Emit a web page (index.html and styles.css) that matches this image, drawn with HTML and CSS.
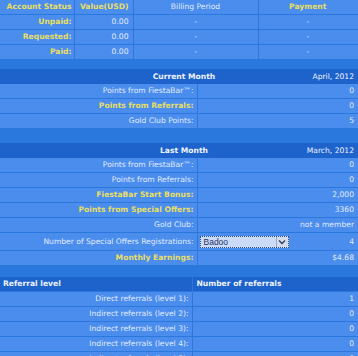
FILE: index.html
```html
<!DOCTYPE html>
<html>
<head>
<meta charset="utf-8">
<link rel="stylesheet" href="styles.css">
</head>
<body>
<div class="page">
  <table class="tbl status">
    <colgroup><col class="c1"><col class="c2"><col class="c3"><col class="c4"></colgroup>
    <tr>
      <td class="r y b">Account Status</td>
      <td class="r y b">Value(USD)</td>
      <td class="c">Billing Period</td>
      <td class="c y b">Payment</td>
    </tr>
    <tr><td class="r y b">Unpaid:</td><td class="r">0.00</td><td class="c">-</td><td class="c">-</td></tr>
    <tr><td class="r y b">Requested:</td><td class="r">0.00</td><td class="c">-</td><td class="c">-</td></tr>
    <tr><td class="r y b">Paid:</td><td class="r">0.00</td><td class="c">-</td><td class="c">-</td></tr>
  </table>

  <div class="mhead m1">
    <span></span>
    <span class="mtitle">Current Month</span>
    <span class="mdate">April, 2012</span>
  </div>
  <table class="tbl month">
    <colgroup><col class="l"><col class="v"></colgroup>
    <tr><td class="r">Points from FiestaBar™:</td><td class="r">0</td></tr>
    <tr><td class="r y b">Points from Referrals:</td><td class="r">0</td></tr>
    <tr><td class="r">Gold Club Points:</td><td class="r">5</td></tr>
  </table>

  <div class="mhead m2">
    <span></span>
    <span class="mtitle">Last Month</span>
    <span class="mdate">March, 2012</span>
  </div>
  <table class="tbl month">
    <colgroup><col class="l"><col class="v"></colgroup>
    <tr><td class="r">Points from FiestaBar™:</td><td class="r">0</td></tr>
    <tr><td class="r">Points from Referrals:</td><td class="r">0</td></tr>
    <tr><td class="r y b">FiestaBar Start Bonus:</td><td class="r">2,000</td></tr>
    <tr><td class="r y b">Points from Special Offers:</td><td class="r">3360</td></tr>
    <tr><td class="r">Gold Club:</td><td class="r">not a member</td></tr>
    <tr class="tall">
      <td class="r">Number of Special Offers Registrations:</td>
      <td class="r">
        <div class="selrow">
          <div class="sel">
            <span class="seltext">Badoo</span>
            <span class="selbtn"><svg width="8" height="6" viewBox="0 0 8 6"><path d="M1 1.5 L4 4.5 L7 1.5" fill="none" stroke="#2a3f6a" stroke-width="1.4"/></svg></span>
          </div>
          <span>4</span>
        </div>
      </td>
    </tr>
    <tr><td class="r y b">Monthly Earnings:</td><td class="r">$4.68</td></tr>
  </table>

  <table class="tbl refs">
    <colgroup><col class="l"><col class="v"></colgroup>
    <tr class="hd"><td class="lf b">Referral level</td><td class="lf b">Number of referrals</td></tr>
    <tr><td class="r">Direct referrals (level 1):</td><td class="r">1</td></tr>
    <tr><td class="r">Indirect referrals (level 2):</td><td class="r">0</td></tr>
    <tr><td class="r">Indirect referrals (level 3):</td><td class="r">0</td></tr>
    <tr><td class="r">Indirect referrals (level 4):</td><td class="r">0</td></tr>
    <tr><td class="r">Indirect referrals (level 5):</td><td class="r">0</td></tr>
  </table>
</div>
</body>
</html>
```
FILE: styles.css
```css
html, body {
  margin: 0;
  padding: 0;
  background: #2a78de;
}
body {
  font-family: "DejaVu Sans", Verdana, sans-serif;
  font-size: 7.6px;
  color: #e2ecff;
}
.page {
  width: 358px;
  overflow: hidden;
}
.tbl {
  width: 358px;
  border-collapse: collapse;
  table-layout: fixed;
}
.tbl td {
  height: 14px;
  padding: 0 3px;
  background: #4a8ded;
  border-bottom: 1px solid #2a78de;
  border-right: 1px solid #2a78de;
  white-space: nowrap;
  overflow: hidden;
  line-height: 14px;
}
.tbl td:last-child {
  border-right: none;
  padding-right: 4px;
}
.status .c1 { width: 74px; }
.status .c2 { width: 59px; }
.status .c3 { width: 125px; }
.status .c4 { width: 100px; }
.status td:first-child { padding-right: 2px; }
.status td:nth-child(2) { padding-right: 4px; }

.month .l { width: 197px; }
.month .v { width: 161px; }
.refs .l { width: 192px; }
.refs .v { width: 166px; }

.r { text-align: right; }
.c { text-align: center; }
.lf { text-align: left; }
.y { color: #e9df63; }
.b { font-weight: bold; }

.mhead {
  display: grid;
  grid-template-columns: 120px 128px 1fr;
  height: 15px;
  line-height: 15px;
  background: #1d63cb;
  color: #eef3ff;
}
.m1 { margin-top: 9px; }
.m2 { margin-top: 14px; }
.mtitle {
  text-align: center;
  font-weight: bold;
}
.mdate {
  text-align: right;
  padding-right: 4px;
}

.tall td {
  height: 17px;
  line-height: 17px;
}
.selrow {
  display: flex;
  align-items: center;
  justify-content: space-between;
}
.sel {
  display: flex;
  align-items: stretch;
  width: 89px;
  height: 12px;
  margin-left: -1px;
  border: 1px dotted #31507e;
  background: #cbdaf6;
  box-sizing: border-box;
}
.seltext {
  flex: 1;
  font-family: "Liberation Sans", Arial, sans-serif;
  font-size: 8.5px;
  line-height: 10px;
  color: #1e3468;
  text-align: left;
  padding-left: 3px;
}
.selbtn {
  width: 11px;
  display: flex;
  align-items: center;
  justify-content: center;
  background: #d6ddea;
  border-left: 1px solid #9aa8c4;
}

.refs {
  margin-top: 11px;
}
.refs .hd td {
  background: #1d63cb;
  color: #eef3ff;
}
.refs .hd td:first-child { padding-left: 3px; }
.refs .hd td:last-child { padding-left: 4px; }
```
